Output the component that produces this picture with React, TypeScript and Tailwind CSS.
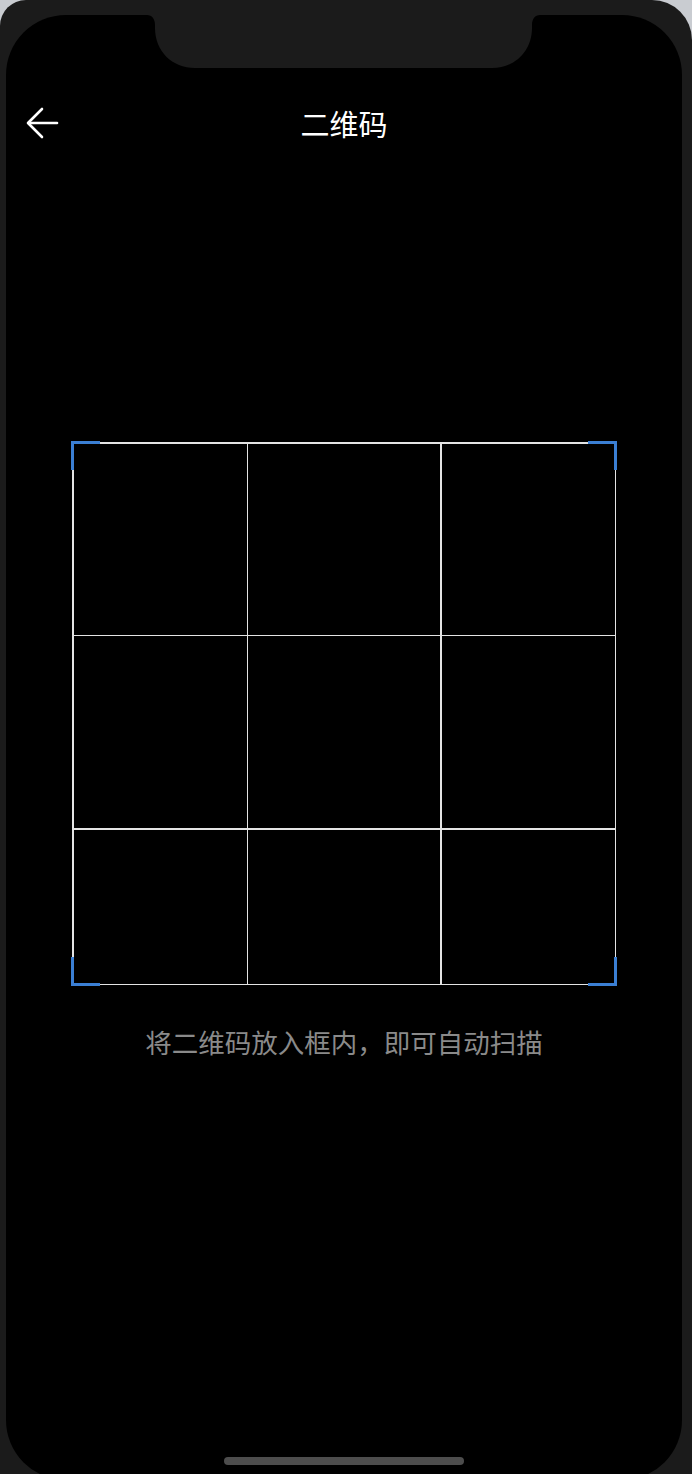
import { ReactNode } from "react";

const cols = ["w-[173px]", "w-[192px]", "w-[173px]"];
const rows = ["h-[191px]", "h-[192px]", "h-[154px]"];

function Corner({ className }: { className: string }) {
  return <div className={`absolute w-[29px] h-[29px] border-[#3b7fd4] ${className}`} />;
}

function Screen({ children }: { children: ReactNode }) {
  return (
    <div className="relative flex-1 flex flex-col bg-black rounded-[60px] mb-[-6px] overflow-hidden">{children}</div>
  );
}

export default function App() {
  return (
    <div className="w-[692px] h-[1474px] bg-[#c9ccd1] overflow-hidden" style={{ fontFamily: '"Noto Sans CJK SC", "Noto Sans", sans-serif' }}>
      <div className="relative h-full flex flex-col bg-[#1b1b1b] rounded-tl-[26px] rounded-tr-[40px] pt-[15px] pl-[6px] pr-[10px]">
        <Screen>
          {/* notch */}
          <svg className="absolute left-[141px] top-0" width="393" height="53" viewBox="0 0 393 53">
            <path d="M0 0 H393 C388 0 385 4 385 10 V13 C385 36 368 53 345 53 H48 C25 53 8 36 8 13 V10 C8 4 5 0 0 0 Z" fill="#1b1b1b" />
          </svg>

          <div className="relative h-[86px] mt-[65px] flex items-center justify-center">
            <svg className="absolute left-[19px]" width="34" height="34" viewBox="0 0 34 34" fill="none" stroke="white" strokeWidth="2.6" strokeLinecap="round" strokeLinejoin="round">
              <path d="M32 17H4" />
              <path d="M17 3L3 17l14 14" />
            </svg>
            <span className="text-white text-[29px] leading-none">二维码</span>
          </div>

          <div className="mt-[276px] self-center relative">
            <div className="flex flex-col gap-[1.5px] bg-[#e4e4e4] p-[1.5px]">
              {rows.map((r) => (
                <div key={r} className="flex gap-[1.5px]">
                  {cols.map((c, i) => (
                    <div key={c + i} className={`${c} ${r} bg-black`} />
                  ))}
                </div>
              ))}
            </div>
            <Corner className="-left-[1px] -top-[1px] border-t-[3px] border-l-[3px]" />
            <Corner className="-right-[1px] -top-[1px] border-t-[3px] border-r-[3px]" />
            <Corner className="-left-[1px] -bottom-[1px] border-b-[3px] border-l-[3px]" />
            <Corner className="-right-[1px] -bottom-[1px] border-b-[3px] border-r-[3px]" />
          </div>

          <p className="mt-[39px] text-center text-[26.5px] leading-[36px] text-[#8a8a8a]">将二维码放入框内，即可自动扫描</p>

          <div className="flex-1" />
          <div className="self-center w-[240px] h-[8px] rounded-full bg-[#4d4d4d] mb-[15px]" />
        </Screen>
      </div>
    </div>
  );
}
